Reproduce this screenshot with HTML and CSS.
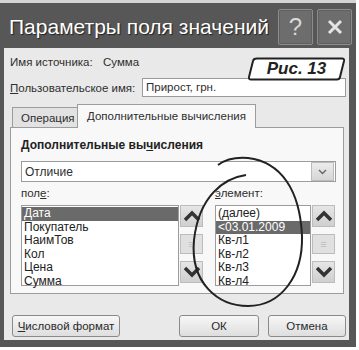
FILE: index.html
```html
<!DOCTYPE html>
<html lang="ru">
<head>
  <meta charset="UTF-8">
  <title>Параметры поля значений</title>
  <link rel="stylesheet" href="styles.css">
</head>
<body>
  <div class="window">
    <div class="titlebar">
      <span class="title">Параметры поля значений</span>
      <div class="caption-btns">
        <button class="cap">?</button>
        <button class="cap">
          <svg width="16" height="16" viewBox="0 0 16 16"><path d="M2 2 L14 14 M14 2 L2 14" stroke="#e4e4e4" stroke-width="3" fill="none"/></svg>
        </button>
      </div>
    </div>

    <div class="body">
      <div class="source"><span class="label">Имя источника:</span><span>Сумма</span></div>
      <div class="custom">
        <span class="label"><u>П</u>ользовательское имя:</span>
        <div class="input">Прирост, грн.</div>
      </div>

      <div class="tabs">
        <div class="tab">Операция</div>
        <div class="tab active">Дополнительные вычисления</div>
      </div>

      <div class="panel">
        <div class="heading">Дополнительные вы<u>ч</u>исления</div>
        <div class="combo">
          <span>Отличие</span>
          <div class="drop">
            <svg width="9" height="6" viewBox="0 0 9 6"><path d="M1 1 L4.5 4.5 L8 1" stroke="#666" stroke-width="1.4" fill="none"/></svg>
          </div>
        </div>

        <div class="pickers">
          <div class="picker left">
            <div class="plabel">пол<u>е</u>:</div>
            <div class="prow">
              <ul class="list">
                <li class="sel">Дата</li>
                <li>Покупатель</li>
                <li>НаимТов</li>
                <li>Кол</li>
                <li>Цена</li>
                <li>Сумма</li>
              </ul>
              <div class="scroll">
                <div class="sbtn"><svg width="18" height="12" viewBox="0 0 18 12"><path d="M2 10 L9 3 L16 10" stroke="#333" stroke-width="3.5" fill="none"/></svg></div>
                <div class="sbtn mid">≡</div>
                <div class="sbtn"><svg width="18" height="12" viewBox="0 0 18 12"><path d="M2 2 L9 9 L16 2" stroke="#333" stroke-width="3.5" fill="none"/></svg></div>
              </div>
            </div>
          </div>

          <div class="picker right">
            <div class="plabel"><u>э</u>лемент:</div>
            <div class="prow">
              <ul class="list">
                <li>(далее)</li>
                <li class="sel">&lt;03.01.2009</li>
                <li>Кв-л1</li>
                <li>Кв-л2</li>
                <li>Кв-л3</li>
                <li>Кв-л4</li>
              </ul>
              <div class="scroll">
                <div class="sbtn"><svg width="18" height="12" viewBox="0 0 18 12"><path d="M2 10 L9 3 L16 10" stroke="#333" stroke-width="3.5" fill="none"/></svg></div>
                <div class="sbtn mid">≡</div>
                <div class="sbtn"><svg width="18" height="12" viewBox="0 0 18 12"><path d="M2 2 L9 9 L16 2" stroke="#333" stroke-width="3.5" fill="none"/></svg></div>
              </div>
            </div>
          </div>
        </div>
      </div>

      <div class="footer">
        <button class="btn format"><u>Ч</u>исловой формат</button>
        <button class="btn ok">ОК</button>
        <button class="btn cancel">Отмена</button>
      </div>
    </div>

    <div class="fig">
      <svg width="99" height="24" viewBox="0 0 99 24"><path d="M10 1.5 H95 Q97.5 1.5 97 4 L93 20 Q92.5 22.5 90 22.5 H4 Q1.5 22.5 2 20 L6 4 Q6.5 1.5 10 1.5 Z" fill="#fff" stroke="#222" stroke-width="2"/></svg>
      <span>Рис. 13</span>
    </div>

    <svg class="circle" width="359" height="350" viewBox="0 0 359 350">
      <path d="M246 175 C224 178 199 196 194 240 C190 283 218 306 248 306 C281 306 303 276 302 236 C300 190 281 162 248 158 C236 157 226 159 218 165" fill="none" stroke="#222" stroke-width="2"/>
    </svg>
  </div>
</body>
</html>
```

FILE: styles.css
```css
body {
  margin: 0;
  background: #fff;
  font-family: "Liberation Sans", Arial, sans-serif;
  color: #2e2e2e;
}
.window {
  position: relative;
  width: 356px;
  height: 347px;
  background: #575757;
  border-top: 3px solid #d4d4d4;
  box-sizing: border-box;
  display: flex;
  flex-direction: column;
}
.titlebar {
  height: 45px;
  display: flex;
  align-items: center;
  justify-content: space-between;
  padding: 0 4px 0 9px;
}
.title {
  color: #fff;
  font-size: 21px;
  text-shadow: 1px 1px 1px #222;
  margin-top: 2px;
}
.caption-btns {
  display: flex;
  gap: 4px;
  align-self: flex-start;
  margin-top: 6px;
}
.cap {
  width: 35px;
  height: 36px;
  background: #6d6d6d;
  border: 1px solid #8c8c8c;
  border-radius: 2px;
  box-shadow: inset 0 0 0 1px #606060;
  color: #d8d8d8;
  font-family: "Liberation Sans", Arial, sans-serif;
  font-size: 24px;
  padding: 0;
  display: flex;
  align-items: center;
  justify-content: center;
}
.body {
  flex: 1;
  margin: 0 7px 7px 4px;
  background: #e9e9e9;
  padding: 8px 3px 0 6px;
  font-size: 11.5px;
}
.source {
  height: 12px;
  line-height: 12px;
  display: flex;
}
.source .label {
  width: 93px;
}
.custom {
  margin-top: 10px;
  height: 19px;
  display: flex;
  align-items: center;
}
.custom .label {
  width: 132px;
}
.input {
  flex: 1;
  height: 19px;
  box-sizing: border-box;
  border: 1px solid #9a9a9a;
  background: #fff;
  line-height: 17px;
  padding-left: 3px;
}
.tabs {
  margin-top: 7px;
  height: 23px;
  display: flex;
  align-items: flex-end;
  padding-left: 2px;
}
.tab {
  height: 20px;
  box-sizing: border-box;
  border: 1px solid #9c9c9c;
  border-bottom: none;
  background: #e2e2e2;
  padding: 0 8px;
  line-height: 20px;
  width: 66px;
  text-align: center;
}
.tab.active {
  height: 24px;
  width: 179px;
  background: #f8f8f8;
  margin-bottom: -1px;
  margin-left: -1px;
  position: relative;
  line-height: 22px;
}
.panel {
  height: 167px;
  margin-right: 2px;
  box-sizing: border-box;
  border: 1px solid #9c9c9c;
  background: #f8f8f8;
  padding: 11px 7px 0 10px;
}
.heading {
  font-weight: bold;
  font-size: 12px;
  line-height: 12px;
  color: #222;
}
.combo {
  margin-top: 10px;
  height: 21px;
  box-sizing: border-box;
  border: 1px solid #9c9c9c;
  background: #fff;
  display: flex;
  align-items: center;
  justify-content: space-between;
  font-size: 12px;
  padding-left: 3px;
}
.drop {
  width: 21px;
  height: 17px;
  margin-right: 1px;
  background: linear-gradient(#ececec, #d6d6d6);
  border: 1px solid #bcbcbc;
  display: flex;
  align-items: center;
  justify-content: center;
}
.pickers {
  display: flex;
  gap: 12px;
  margin-top: 5px;
}
.plabel {
  height: 12px;
  line-height: 12px;
}
.prow {
  display: flex;
  margin-top: 6px;
}
.list {
  list-style: none;
  margin: 0;
  padding: 1px 0 0;
  height: 81px;
  box-sizing: border-box;
  border: 1px solid #9c9c9c;
  background: #fff;
  font-size: 12px;
}
.list li {
  height: 13.5px;
  line-height: 13.5px;
  padding-left: 2px;
  color: #222;
}
.list li.sel {
  background: #6a6a6a;
  color: #fff;
}
.left .list {
  width: 158px;
}
.right .list {
  width: 96px;
}
.scroll {
  display: flex;
  flex-direction: column;
  justify-content: space-between;
  margin-left: 1px;
  padding-bottom: 3px;
}
.sbtn {
  width: 23px;
  height: 22px;
  box-sizing: border-box;
  background: linear-gradient(#e6e6e6, #cfcfcf);
  border: 1px solid #bcbcbc;
  display: flex;
  align-items: center;
  justify-content: center;
}
.sbtn.mid {
  height: 20px;
  color: #bdbdbd;
  font-size: 11px;
  background: #e0e0e0;
}
.footer {
  margin-top: 21px;
  display: flex;
  padding-left: 2px;
}
.btn {
  height: 22px;
  background: linear-gradient(#f7f7f7, #dedede);
  border: 1px solid #8a8a8a;
  border-radius: 3px;
  font-family: "Liberation Sans", Arial, sans-serif;
  font-size: 11.5px;
  color: #2a2a2a;
  padding: 0;
}
.btn.format {
  width: 108px;
}
.btn.ok {
  width: 80px;
  margin-left: auto;
}
.btn.cancel {
  width: 78px;
  margin-left: 9px;
}
.fig {
  position: absolute;
  left: 247px;
  top: 54px;
  width: 99px;
  height: 24px;
}
.fig svg {
  position: absolute;
  left: 0;
  top: 0;
}
.fig span {
  position: relative;
  display: block;
  text-align: center;
  line-height: 24px;
  font-weight: bold;
  font-style: italic;
  font-size: 17px;
  color: #222;
}
.circle {
  position: absolute;
  left: 0;
  top: -3px;
  pointer-events: none;
}
```
